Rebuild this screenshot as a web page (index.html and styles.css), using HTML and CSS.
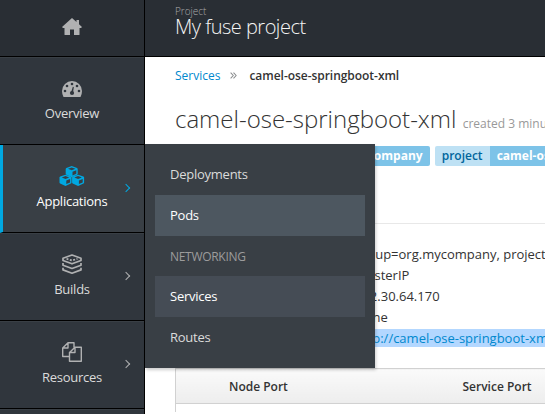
FILE: index.html
```html
<!DOCTYPE html>
<html lang="en">
<head>
<meta charset="utf-8">
<title>Services</title>
<link rel="stylesheet" href="styles.css">
</head>
<body>
<header class="topbar">
  <a class="home"><svg width="20" height="17" viewBox="0 0 20 17"><path fill="currentColor" d="M10 0L0 9l1 .9h1.500V16.500q0 .5.5.5H8v-5.500h4V17h5q.5 0 .5-.5V9.900H19L20 9l-3-2.700V2h-2.500v2.100z"/></svg></a>
  <div class="project"><span class="project-label">Project</span><span class="project-name">My fuse project</span></div>
</header>
<div class="body">
  <nav class="sidebar">
    <a class="nav-item">
      <svg width="20" height="20" viewBox="0 -3 20 20"><path fill="currentColor" d="M1.500 16Q0 13 0 10a10 10 0 0 1 20 0q0 3-1.500 6z"/><g fill="#30363d"><circle cx="3" cy="10" r="1.300"/><circle cx="5" cy="5" r="1.300"/><circle cx="10" cy="3" r="1.300"/><circle cx="15" cy="5" r="1.300"/><circle cx="17" cy="10" r="1.300"/><circle cx="10" cy="12" r="2.100"/><path d="M9.200 11l1.600-5.200 1 .3L11 12z"/></g></svg>
      <span>Overview</span>
    </a>
    <a class="nav-item active">
      <svg width="26" height="20" viewBox="0 0 26 20"><defs><g id="cube"><path fill="currentColor" d="M6.200 0l5.300 1.900q.7.300.7 1v4.900q0 .7-.6 1L6.200 11.200.8 8.800q-.6-.3-.6-1V2.900q0-.7.7-1z"/><path fill="#393f45" d="M6.200 1.400l3.700 1.400-3.700 1.500-3.700-1.500zM7 5.700l3.800-1.500v3.500L7 9.400z"/></g></defs><use href="#cube" x="6.500"/><use href="#cube" x=".3" y="8.700"/><use href="#cube" x="12.900" y="8.700"/></svg>
      <span>Applications</span><i class="chevron"></i>
    </a>
    <a class="nav-item">
      <svg width="20" height="20" viewBox="0 0 20 20" fill="none" stroke="currentColor" stroke-width="1.700" stroke-linejoin="round"><path d="M10 1l9 3.300v2.200L10 9.800 1 6.500V4.300z"/><path d="M1 9v2.200l9 3.300 9-3.300V9M1 13.700v2.200l9 3.300 9-3.300v-2.200"/><path stroke-dasharray="2 1.500" d="M4.500 4.800L10 6.500l5.500-1.700"/></svg>
      <span>Builds</span><i class="chevron"></i>
    </a>
    <a class="nav-item">
      <svg width="20" height="20" viewBox="0 0 20 20" fill="none" stroke="currentColor" stroke-width="1.400" stroke-linejoin="round"><path d="M7.500 14.500H.7V6L6 .7h6v4.800M6 .7V6H.7M7.500 10.500L13 5.200h6.300v14.100H7.500zM13 5.200v5.300H7.500"/></svg>
      <span>Resources</span><i class="chevron"></i>
    </a>
    <a class="nav-item"></a>
  </nav>
  <main class="content">
    <div class="breadcrumb"><a>Services</a><svg width="7" height="7" viewBox="0 0 8 8" fill="none" stroke="#8b8d8f" stroke-width="1.200"><path d="M.7.700L3.700 4l-3 3.300M4 .7L7 4 4 7.300"/></svg><strong>camel-ose-springboot-xml</strong></div>
    <h1>camel-ose-springboot-xml <small>created 3 minutes ago</small></h1>
    <div class="labels">
      <span class="label"><b>group</b><em>org.mycompany</em></span>
      <span class="label"><b>project</b><em>camel-ose-springboot-xml</em></span>
    </div>
    <hr>
    <dl class="details">
      <dt>Selectors:</dt><dd>group=org.mycompany, project=camel-ose-springboot-xml</dd>
      <dt>Type:</dt><dd>ClusterIP</dd>
      <dt>IP:</dt><dd>172.30.64.170</dd>
      <dt>Hostname:</dt><dd>None</dd>
      <dt>Routes:</dt><dd class="selected">http://camel-ose-springboot-xml</dd>
    </dl>
    <table><thead><tr><th>Node Port</th><th>Service Port</th></tr></thead><tbody><tr><td></td><td></td></tr></tbody></table>
  </main>
  <div class="menu">
    <a>Deployments</a>
    <a class="hover">Pods</a>
    <span class="menu-heading">NETWORKING</span>
    <a class="current">Services</a>
    <a>Routes</a>
  </div>
</div>
</body>
</html>
```
FILE: styles.css
```css
* { box-sizing: border-box; }
body { margin: 0; width: 545px; height: 414px; overflow: hidden; background: #fff; color: #333; font: 13px/21px "Open Sans", sans-serif; }
.topbar { display: flex; height: 57px; background: #292e34; border-bottom: 1px solid #000; }
.home { display: flex; width: 145px; padding-top: 18px; justify-content: center; align-items: flex-start; border-right: 1px solid #000; color: #b0b1b2; }
.project { display: flex; flex-direction: column; padding: 5px 0 0 30px; }
.project-label { color: #aaa; font-size: 10px; font-weight: 300; line-height: 13px; }
.project-name { color: #f5f5f5; font-size: 20px; font-weight: 300; line-height: 18px; letter-spacing: -.5px; white-space: nowrap; }
.body { position: relative; display: flex; height: 357px; overflow: hidden; }
.sidebar { flex: none; width: 145px; background: #30363d; border-right: 1px solid #000; }
.nav-item { position: relative; display: flex; flex-direction: column; align-items: center; height: 88px; padding-top: 21px; border-bottom: 1px solid #000; box-shadow: inset 0 1px #393f45; color: #b0b1b2; }
.nav-item:last-child { height: 5px; padding: 0; border: 0; }
.nav-item svg { height: 20px; }
.nav-item span { margin-top: 5px; color: #dbdbdb; font-size: 13px; letter-spacing: -.25px; }
.nav-item.active { background: #393f45; border-left: 3px solid #00a8e1; padding-right: 3px; color: #00a8e1; }
.nav-item.active span { color: #fff; }
.chevron { position: absolute; right: 15px; top: 40px; width: 6px; height: 6px; border: solid currentColor; border-width: 1px 1px 0 0; transform: rotate(45deg); }
.content { flex: 1; min-width: 0; overflow: hidden; padding: 8px 0 0 30px; }
.breadcrumb { display: flex; align-items: center; height: 20px; font-size: 12px; white-space: nowrap; }
.breadcrumb a { color: #0088ce; }
.breadcrumb svg { margin: 1px 12px 0 10px; }
.breadcrumb strong { font-weight: 600; font-size: 12px; letter-spacing: -.04px; }
h1 { margin: 17px 0 0; height: 35px; font-size: 24px; font-weight: 300; line-height: 34px; white-space: nowrap; }
h1 small { color: #999; font-size: 12px; font-weight: 400; }
.labels { display: flex; justify-content: flex-start; gap: 5px; width: 500px; margin: 9px 0 0 89px; }
.label { display: flex; height: 20px; font-size: 12px; line-height: 19px; white-space: nowrap; }
.label b { width: 55px; text-align: center; border-radius: 2px 0 0 2px; background: #bee1f4; color: #00659c; font-weight: 600; }
.label em { padding: 0 7px; border-radius: 0 2px 2px 0; background: #7dc3e8; color: #fff; font-style: normal; font-weight: 700; }
hr { height: 1px; margin: 57px 0 20px; border: 0; background: #e8e8e8; }
.details { display: grid; grid-template-columns: 180px max-content; margin: 0; white-space: nowrap; }
dt { font-weight: 600; }
dd { margin: 0; }
.selected { height: 18px; margin-top: 1px; line-height: 18px; background: #b3d7ff; color: #0088ce; }
table { width: 480px; margin-top: 19px; border-collapse: collapse; table-layout: fixed; }
th { height: 35px; padding: 0 0 0 53px; border: solid #d1d1d1; border-width: 1px 0; background: linear-gradient(#fafafa, #ededed); text-align: left; font-size: 12px; font-weight: 600; }
th:first-child, td:first-child { width: 234px; border-left: 1px solid #d1d1d1; }
td { height: 8px; padding: 0; }
.menu { position: absolute; left: 145px; top: 87px; width: 230px; height: 224px; padding: 10px; background: #393f45; box-shadow: 1px 2px 3px rgba(0,0,0,.2); color: #dbdbdb; font-size: 13px; letter-spacing: -.25px; }
.menu > * { display: block; height: 41px; padding-left: 15px; line-height: 41px; }
.menu .menu-heading { height: 40px; color: #9c9c9c; font-size: 12px; letter-spacing: -.3px; }
.menu .hover { background: #4d5760; color: #fff; }
.menu .current { background: #454c55; color: #fff; }
```
